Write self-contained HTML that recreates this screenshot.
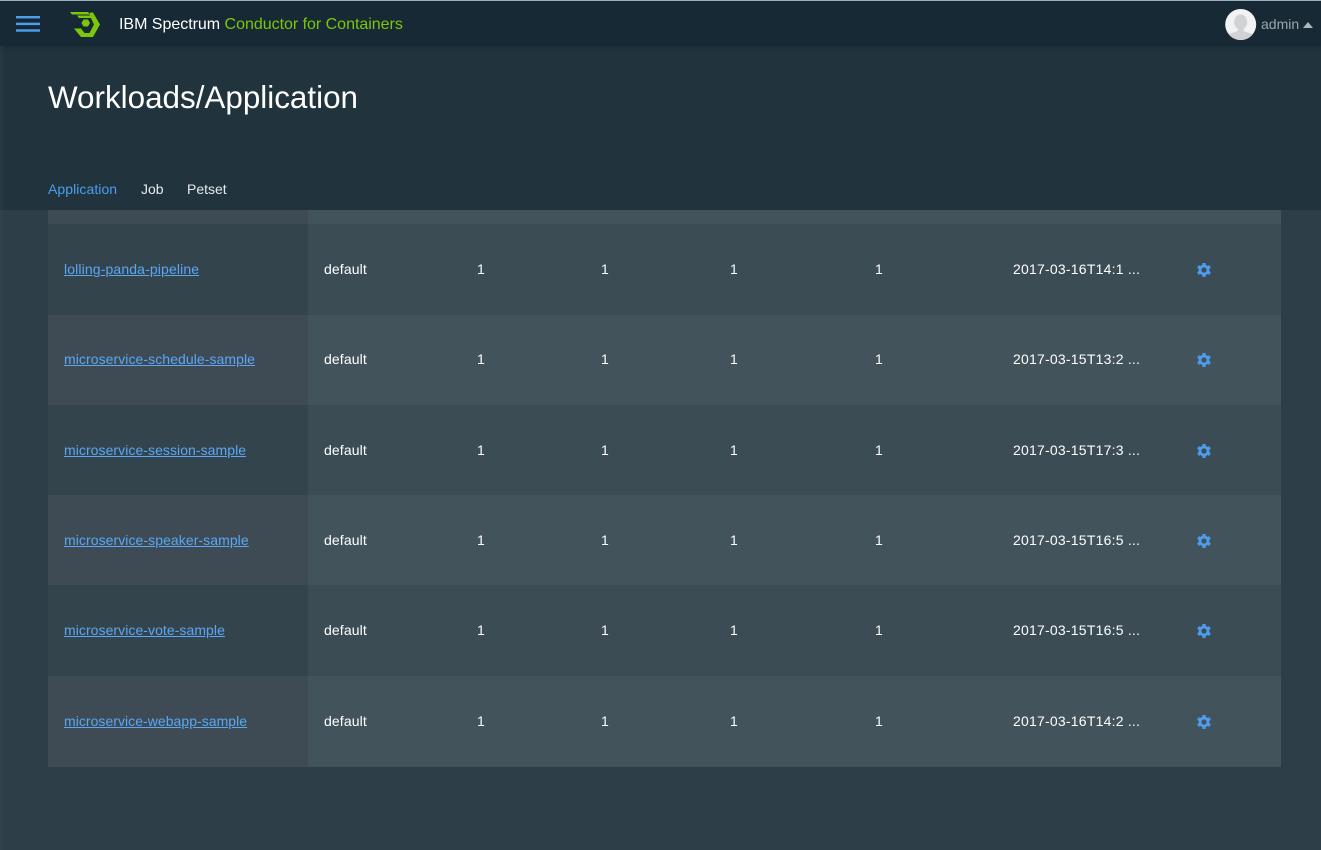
<!DOCTYPE html>
<html>
<head>
<meta charset="utf-8">
<style>
html,body{margin:0;padding:0;width:1321px;height:850px;overflow:hidden;background:#2d3e49;font-family:"Liberation Sans",Arial,sans-serif;}
.abs{position:absolute;}
#top{left:0;top:0;width:1321px;height:46px;background:#172935;border-top:1px solid #9fb0c0;box-sizing:border-box;box-shadow:0 2px 4px rgba(15,30,40,.3);z-index:3;}
#hero{left:0;top:46px;width:1321px;height:164px;background:#21343d;}
#edge{left:0;top:46px;width:5px;height:804px;background:linear-gradient(90deg,rgba(70,85,95,.18),rgba(70,85,95,0));z-index:2;}
.t{white-space:nowrap;}
h1{position:absolute;left:48px;top:80px;margin:0;font-size:31.4px;line-height:36px;font-weight:400;color:#fff;white-space:nowrap;}
.tab{position:absolute;top:181px;font-size:14px;line-height:16px;color:#e6eaec;white-space:nowrap;}
.c1{position:absolute;left:48px;width:260px;}
.c2{position:absolute;left:308px;width:973px;}
.cell{position:absolute;font-size:14px;line-height:16px;color:#fff;white-space:nowrap;}
.d{letter-spacing:.12px;}
.dt{letter-spacing:.22px;}
a{color:#5aa7f5;text-decoration:underline;}
</style>
</head>
<body>
<div class="abs" id="hero"></div>
<div class="abs" id="edge"></div>
<div class="abs" id="top">
  <svg class="abs" style="left:16px;top:14px" width="24" height="18" viewBox="0 0 24 18">
    <rect x="0" y="1" width="24" height="2.4" fill="#4c9df0"/>
    <rect x="0" y="7.7" width="24" height="2.4" fill="#4c9df0"/>
    <rect x="0" y="14.3" width="24" height="2.4" fill="#4c9df0"/>
  </svg>
  <svg class="abs" style="left:60px;top:4px" width="50" height="40" viewBox="60 5 50 40">
    <path fill="#7ac70c" d="M70 12H88L90 14.5H72Z"/>
    <path fill="#7ac70c" d="M77 15.5H89.5L91.5 18H79Z"/>
    <path fill="#7ac70c" d="M90 12.5H93L100 24.5L93 37H81L74 28.5H81L84.5 33H89.5L94 24.5L89.5 15Z"/>
    <path fill="#7ac70c" d="M83.5 19.5H88L90 23L88 26.5H83.5L81.5 23Z"/>
  </svg>
  <div class="abs t" style="left:119px;top:15px;font-size:16px;line-height:18px;color:#fff;letter-spacing:-.02px;">IBM Spectrum <span style="color:#7ac70c">Conductor for Containers</span></div>
  <svg class="abs" style="left:1225px;top:8px" width="32" height="32" viewBox="0 0 32 32">
    <defs><clipPath id="cp"><circle cx="15.7" cy="15.5" r="15.5"/></clipPath></defs>
    <circle cx="15.7" cy="15.5" r="15.5" fill="#f2f2f2"/>
    <g clip-path="url(#cp)" fill="#d0d2d3">
      <ellipse cx="15.7" cy="13" rx="6.5" ry="7.5"/>
      <path d="M12.7 19H18.7V22L27 25V32H4V25L12.7 22Z"/>
    </g>
  </svg>
  <div class="abs t" style="left:1261px;top:15px;font-size:14px;line-height:16px;color:#9aa5ac;">admin</div>
  <div class="abs" style="left:1303px;top:21px;width:0;height:0;border-left:5px solid transparent;border-right:5px solid transparent;border-bottom:6px solid #aeb7bc;"></div>
</div>

<h1>Workloads/Application</h1>
<div class="tab" style="left:48px;color:#4c9df0;letter-spacing:.06px">Application</div>
<div class="tab" style="left:141px">Job</div>
<div class="tab" style="left:187px">Petset</div>

<div class="c1" style="top:210px;height:14px;background:#3e4b54"></div><div class="c2" style="top:210px;height:14px;background:#43535c"></div>
<div class="c1" style="top:224px;height:91px;background:#34444d"></div><div class="c2" style="top:224px;height:91px;background:#3b4c55"></div>
<div class="c1" style="top:315px;height:90px;background:#3e4b54"></div><div class="c2" style="top:315px;height:90px;background:#43535c"></div>
<div class="c1" style="top:405px;height:90px;background:#34444d"></div><div class="c2" style="top:405px;height:90px;background:#3b4c55"></div>
<div class="c1" style="top:495px;height:90px;background:#3e4b54"></div><div class="c2" style="top:495px;height:90px;background:#43535c"></div>
<div class="c1" style="top:585px;height:91px;background:#34444d"></div><div class="c2" style="top:585px;height:91px;background:#3b4c55"></div>
<div class="c1" style="top:676px;height:91px;background:#3e4b54"></div><div class="c2" style="top:676px;height:91px;background:#43535c"></div>

<svg width="0" height="0" style="position:absolute"><defs>
<g id="g" fill="#4c9df0">
  <circle cx="7" cy="7" r="4" fill="none" stroke="#4c9df0" stroke-width="2.7"/>
  <rect x="5.4" y="0" width="3.2" height="2.6"/>
  <rect x="5.4" y="0" width="3.2" height="2.6" transform="rotate(60 7 7)"/>
  <rect x="5.4" y="0" width="3.2" height="2.6" transform="rotate(120 7 7)"/>
  <rect x="5.4" y="0" width="3.2" height="2.6" transform="rotate(180 7 7)"/>
  <rect x="5.4" y="0" width="3.2" height="2.6" transform="rotate(240 7 7)"/>
  <rect x="5.4" y="0" width="3.2" height="2.6" transform="rotate(300 7 7)"/>
</g>
</defs></svg>

<div class="cell" style="left:64px;top:261px;letter-spacing:.13px"><a>lolling-panda-pipeline</a></div>
<div class="cell d" style="left:324px;top:261px">default</div>
<div class="cell" style="left:477px;top:261px">1</div>
<div class="cell" style="left:601px;top:261px">1</div>
<div class="cell" style="left:730px;top:261px">1</div>
<div class="cell" style="left:875px;top:261px">1</div>
<div class="cell dt" style="left:1013px;top:261px">2017-03-16T14:1 ...</div>
<svg class="abs" style="left:1197px;top:263px" width="14" height="14"><use href="#g"/></svg>

<div class="cell" style="left:64px;top:351px;letter-spacing:.07px"><a>microservice-schedule-sample</a></div>
<div class="cell d" style="left:324px;top:351px">default</div>
<div class="cell" style="left:477px;top:351px">1</div>
<div class="cell" style="left:601px;top:351px">1</div>
<div class="cell" style="left:730px;top:351px">1</div>
<div class="cell" style="left:875px;top:351px">1</div>
<div class="cell dt" style="left:1013px;top:351px">2017-03-15T13:2 ...</div>
<svg class="abs" style="left:1197px;top:353px" width="14" height="14"><use href="#g"/></svg>

<div class="cell" style="left:64px;top:442px;letter-spacing:.06px"><a>microservice-session-sample</a></div>
<div class="cell d" style="left:324px;top:442px">default</div>
<div class="cell" style="left:477px;top:442px">1</div>
<div class="cell" style="left:601px;top:442px">1</div>
<div class="cell" style="left:730px;top:442px">1</div>
<div class="cell" style="left:875px;top:442px">1</div>
<div class="cell dt" style="left:1013px;top:442px">2017-03-15T17:3 ...</div>
<svg class="abs" style="left:1197px;top:444px" width="14" height="14"><use href="#g"/></svg>

<div class="cell" style="left:64px;top:532px;letter-spacing:.07px"><a>microservice-speaker-sample</a></div>
<div class="cell d" style="left:324px;top:532px">default</div>
<div class="cell" style="left:477px;top:532px">1</div>
<div class="cell" style="left:601px;top:532px">1</div>
<div class="cell" style="left:730px;top:532px">1</div>
<div class="cell" style="left:875px;top:532px">1</div>
<div class="cell dt" style="left:1013px;top:532px">2017-03-15T16:5 ...</div>
<svg class="abs" style="left:1197px;top:534px" width="14" height="14"><use href="#g"/></svg>

<div class="cell" style="left:64px;top:622px;letter-spacing:.06px"><a>microservice-vote-sample</a></div>
<div class="cell d" style="left:324px;top:622px">default</div>
<div class="cell" style="left:477px;top:622px">1</div>
<div class="cell" style="left:601px;top:622px">1</div>
<div class="cell" style="left:730px;top:622px">1</div>
<div class="cell" style="left:875px;top:622px">1</div>
<div class="cell dt" style="left:1013px;top:622px">2017-03-15T16:5 ...</div>
<svg class="abs" style="left:1197px;top:624px" width="14" height="14"><use href="#g"/></svg>

<div class="cell" style="left:64px;top:713px;letter-spacing:.04px"><a>microservice-webapp-sample</a></div>
<div class="cell d" style="left:324px;top:713px">default</div>
<div class="cell" style="left:477px;top:713px">1</div>
<div class="cell" style="left:601px;top:713px">1</div>
<div class="cell" style="left:730px;top:713px">1</div>
<div class="cell" style="left:875px;top:713px">1</div>
<div class="cell dt" style="left:1013px;top:713px">2017-03-16T14:2 ...</div>
<svg class="abs" style="left:1197px;top:715px" width="14" height="14"><use href="#g"/></svg>
</body>
</html>
